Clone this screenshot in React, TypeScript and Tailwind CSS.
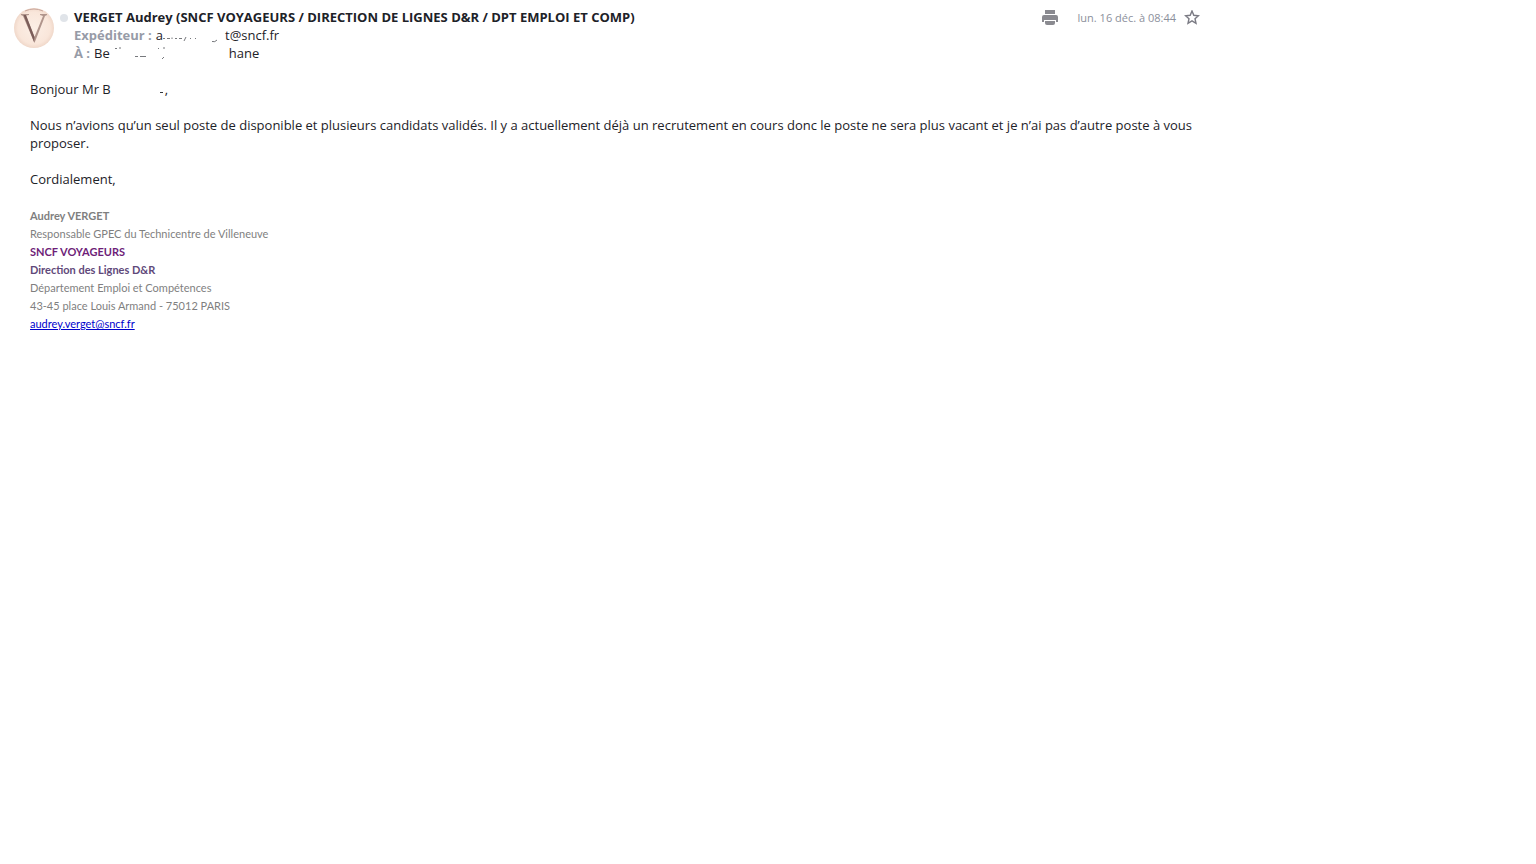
import React from "react";

interface SignatureLine {
  text: string;
  className: string;
}

const signature: SignatureLine[] = [
  { text: "Audrey VERGET", className: "font-bold text-[#7f7f7f]" },
  { text: "Responsable GPEC du Technicentre de Villeneuve", className: "text-[#7f7f7f]" },
  { text: "SNCF VOYAGEURS", className: "font-bold text-[#6e1e78]" },
  { text: "Direction des Lignes D&R", className: "font-bold text-[#5f497a]" },
  { text: "Département Emploi et Compétences", className: "text-[#7f7f7f]" },
  { text: "43-45 place Louis Armand - 75012 PARIS", className: "text-[#7f7f7f]" },
];

const Avatar = () => (
  <svg viewBox="0 0 40 40" className="size-10 shrink-0" aria-hidden="true">
    <defs>
      <radialGradient id="avatar">
        <stop offset="0" stopColor="#fcefe6" />
        <stop offset="0.8" stopColor="#f9e6da" />
        <stop offset="1" stopColor="#f0d8ca" />
      </radialGradient>
    </defs>
    <circle cx="20" cy="20" r="20" fill="url(#avatar)" />
    <path d="M11 3Q20 -1 29 3" fill="none" stroke="#c9a79c" strokeWidth="1" />
    <path d="M7 6H15V7L12 7.500L20.500 29L29 8L26 7V6H33V7L31 8L20.500 35L9 8L7 7Z" fill="#b0958c" />
    <path d="M9.500 7L12 7L20.500 29L20 34Z" fill="#7b5d59" />
  </svg>
);

const PrinterIcon = () => (
  <svg viewBox="0 0 16 16" className="size-4" fill="#8a8a90" aria-hidden="true">
    <path d="M3 0H13V4H3Z" />
    <path d="M2 5H14Q16 5 16 7V12H14V10H2V12H0V7Q0 5 2 5Z" />
    <path d="M3 11H13V13Q13 15 11 15H5Q3 15 3 13Z" />
  </svg>
);

const StarIcon = () => (
  <svg viewBox="0 0 16 16" className="size-4" fill="none" stroke="#7b7b84" strokeWidth="1.400" aria-hidden="true">
    <path d="M8 1L9.800 5.300L14.500 5.700L11 8.700L12 13.300L8 10.900L4 13.300L5 8.700L1.500 5.700L6.200 5.300Z" />
  </svg>
);

const App: React.FC = () => {
  return (
    <div className="bg-white font-['Open_Sans','Noto_Sans',sans-serif] text-[13px] leading-[18px] text-[#1d2228]">
      <article className="max-w-[1200px]">
        <header className="flex items-start pt-2 pl-3.5">
          <Avatar />
          <span className="mx-1.5 mt-1.5 size-2 shrink-0 rounded-full bg-[#e0e4e9]" />
          <div className="flex-1">
            <h1 className="font-bold">
              VERGET Audrey (SNCF VOYAGEURS / DIRECTION DE LIGNES D&amp;R / DPT EMPLOI ET COMP)
            </h1>
            <p className="flex items-center">
              <span className="mr-1 font-bold text-[#979ba7]">Expéditeur :</span>
              <span>a</span>
              <svg viewBox="0 0 62 18" className="h-[18px] w-[62px]" fill="none" stroke="#77797d" aria-hidden="true">
                <path d="M0 12.500H2M4 12.500H7M9 11.500V13M12 12.500H14M16 12.500H19M23 11L21 15M27 12.500H28M32 12.500H33M49 15.500Q52 16.500 54 14" />
              </svg>
              <span>t@sncf.fr</span>
            </p>
            <p className="flex items-center">
              <span className="mr-1 font-bold text-[#979ba7]">À :</span>
              <span>Be</span>
              <svg viewBox="0 0 119 18" className="h-[18px] w-[119px]" fill="none" stroke="#77797d" aria-hidden="true">
                <path d="M5 4.500H7M10 3V5M25 12.500H28M30 12.500H36M48 4.500H49M54 3V5M54 13L52 15" />
              </svg>
              <span>hane</span>
            </p>
          </div>
          <div className="mt-px flex items-center text-[11px] text-[#8c909c]">
            <button type="button" aria-label="Imprimer" className="mr-5">
              <PrinterIcon />
            </button>
            <time>lun. 16 déc. à 08:44</time>
            <button type="button" aria-label="Suivre" className="ml-2">
              <StarIcon />
            </button>
          </div>
        </header>

        <div className="mt-[18px] space-y-[18px] pl-[30px]">
          <p className="flex items-center">
            <span>Bonjour Mr B</span>
            <svg viewBox="0 0 54 18" className="h-[18px] w-[54px]" fill="none" stroke="#34383d" aria-hidden="true">
              <path d="M49 12.500H52" />
            </svg>
            <span>,</span>
          </p>
          <p>
            Nous n’avions qu’un seul poste de disponible et plusieurs candidats validés. Il y a actuellement déjà un
            recrutement en cours donc le poste ne sera plus vacant et je n’ai pas d’autre poste à vous proposer.
          </p>
          <p>Cordialement,</p>
          <address className="pt-px font-['Lato','Open_Sans',sans-serif] text-[11px] not-italic">
            {signature.map((line) => (
              <p key={line.text} className={line.className}>
                {line.text}
              </p>
            ))}
            <a href="mailto:audrey.verget@sncf.fr" className="text-[#0000cc] underline">
              audrey.verget@sncf.fr
            </a>
          </address>
        </div>
      </article>
    </div>
  );
};

export default App;
